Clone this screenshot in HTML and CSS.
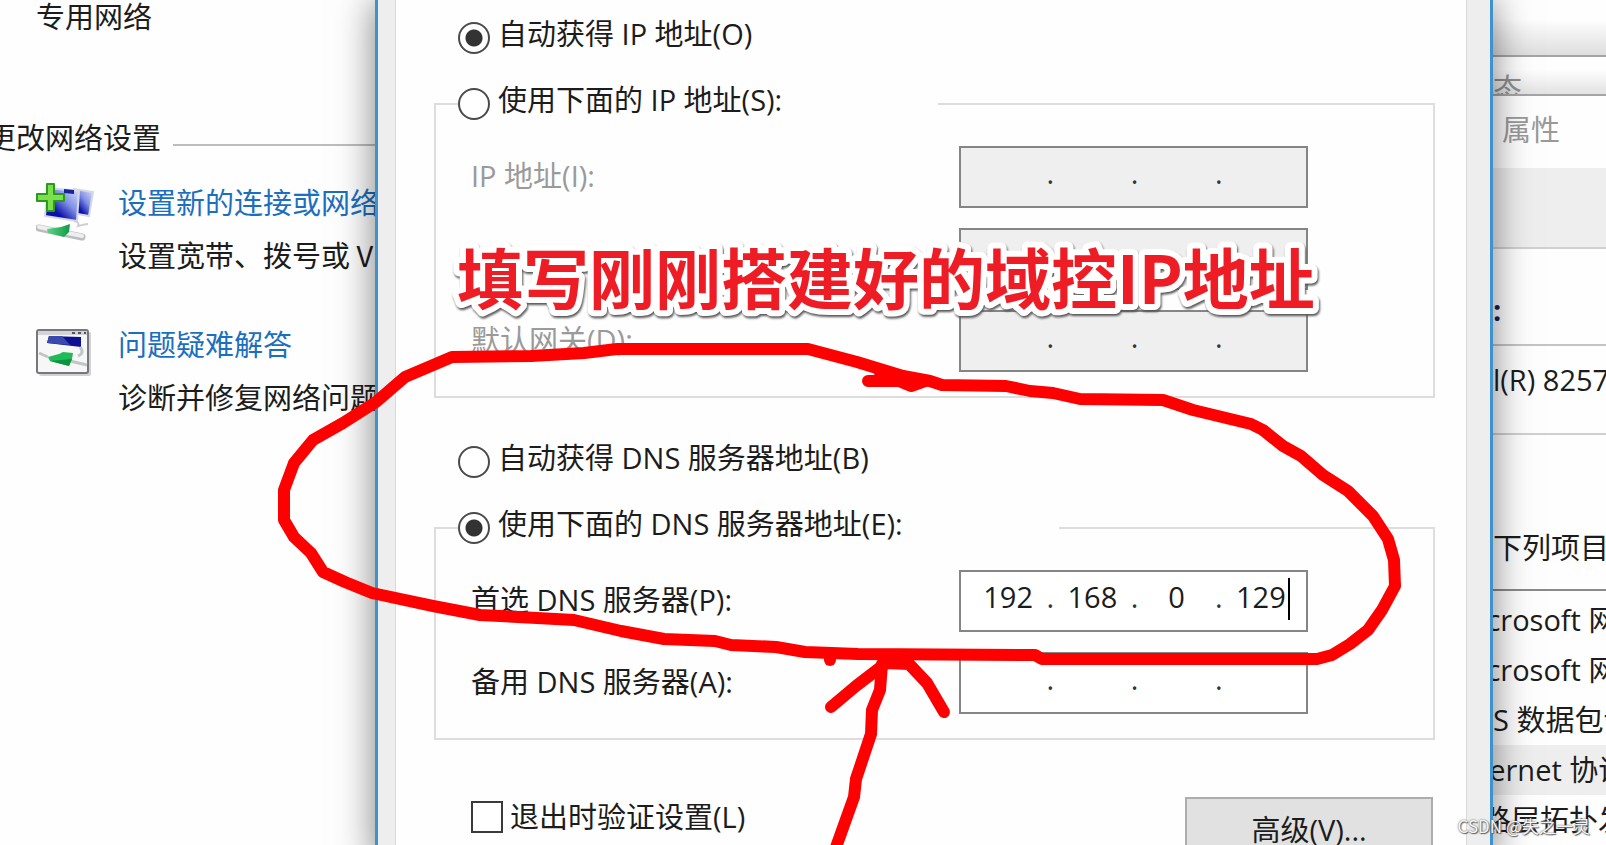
FILE: index.html
```html
<!DOCTYPE html>
<html lang="zh-CN">
<head>
    <meta charset="UTF-8">
    <meta name="viewport" content="width=device-width, initial-scale=1.0">
    <title>网络设置</title>
    <link rel="stylesheet" href="styles.css">
</head>
<body>

    <div class="desktop">
        <!-- Network center -->
        <div class="network-center">
            <p class="network-type">专用网络</p>
            <h2 class="section-title">更改网络设置</h2>

            <div class="task">
                <svg class="task-icon" width="60" height="60" viewBox="0 0 60 60" aria-hidden="true">
                    <defs>
                        <linearGradient id="screen" x1="0" y1="1" x2="1" y2="0">
                            <stop offset="0.3" stop-color="#0a10a8"/>
                            <stop offset="0.6" stop-color="#7f8fe6"/>
                            <stop offset="1" stop-color="#dfe6fb"/>
                        </linearGradient>
                        <linearGradient id="cable" x1="0" y1="0" x2="1" y2="0">
                            <stop offset="0" stop-color="#5fd486"/>
                            <stop offset="1" stop-color="#0f9a48"/>
                        </linearGradient>
                    </defs>
                    <path d="M38 6 L57 9 L53 33 L36 30 Z" fill="url(#screen)" stroke="#d5d9e4" stroke-width="2"/>
                    <path d="M12 5 L43 8 L41 38 L9 33 Z" fill="url(#screen)" stroke="#d5d9e4" stroke-width="2"/>
                    <path d="M28 6 L38 7 L38 11 L28 10 Z" fill="#1a1f9c"/>
                    <path d="M38 38 q6 1 4 5 q8 -2 10 -2" fill="none" stroke="#cfcfcf" stroke-width="2"/>
                    <path d="M3 45 L46 54" stroke="#bdbdbd" stroke-width="7" stroke-linecap="round"/>
                    <path d="M3 44 L46 53" stroke="#eeeeee" stroke-width="4" stroke-linecap="round"/>
                    <path d="M11 46 L25 44 L34 41 L33 49 L28 54 L12 50 Z" fill="url(#cable)"/>
                    <path d="M11 1 h7 v10 h10 v7 h-10 v10 h-7 v-10 h-10 v-7 h10 z" fill="#7be04c" stroke="#2c9a1c" stroke-width="2" stroke-linejoin="round"/>
                </svg>
                <div class="task-text">
                    <a href="#">设置新的连接或网络</a>
                    <p>设置宽带、拨号或 VPN</p>
                </div>
            </div>

            <div class="task">
                <svg class="task-icon" width="60" height="60" viewBox="0 0 60 60" aria-hidden="true">
                    <rect x="3" y="7" width="52" height="44" rx="2" fill="#d2d2d2"/>
                    <rect x="1" y="5" width="51" height="43" rx="2" fill="#f7f7f7" stroke="#77777d" stroke-width="2"/>
                    <path d="M2 8 H51" stroke="#d4d4d8" stroke-width="4"/>
                    <path d="M36 8 h3 M42 8 h3 M48 8 h2" stroke="#555555" stroke-width="2"/>
                    <path d="M13 11 L45 12 L45 22 L11 18 Z" fill="#0b1192"/>
                    <path d="M13 11 L26 11 L34 20 L11 18 Z" fill="#3a49ae"/>
                    <path d="M44 22 q5 6 -2 9 M3 28 L12 32 M34 36 L51 40" fill="none" stroke="#c3c6c6" stroke-width="3"/>
                    <path d="M12 32 L23 29 L27 27 L37 28 L36 34 L33 41 L14 36 Z" fill="#1fbb58"/>
                    <path d="M14 36 L33 41 L36 34 Z" fill="#0d9242"/>
                </svg>
                <div class="task-text">
                    <a href="#">问题疑难解答</a>
                    <p>诊断并修复网络问题</p>
                </div>
            </div>
        </div>

        <!-- TCP/IP properties dialog -->
        <form class="dialog">
            <div class="dialog-body">
                <label class="choice">
                    <input type="radio" name="ip-mode" checked>
                    <span>自动获得 IP 地址(O)</span>
                </label>

                <fieldset class="ip-group">
                    <legend>
                        <label class="choice">
                            <input type="radio" name="ip-mode">
                            <span>使用下面的 IP 地址(S):</span>
                        </label>
                    </legend>
                    <div class="field-row">
                        <label class="disabled" for="ip-1">IP 地址(I):</label>
                        <div class="ip-field disabled">
                            <input type="text" id="ip-1" disabled><span>.</span>
                            <input type="text" aria-label="IP 2" disabled><span>.</span>
                            <input type="text" aria-label="IP 3" disabled><span>.</span>
                            <input type="text" aria-label="IP 4" disabled>
                        </div>
                    </div>
                    <div class="field-row no-label">
                        <div class="ip-field disabled">
                            <input type="text" aria-label="子网掩码 1" disabled>
                            <input type="text" aria-label="子网掩码 2" disabled>
                            <input type="text" aria-label="子网掩码 3" disabled>
                            <input type="text" aria-label="子网掩码 4" disabled>
                        </div>
                    </div>
                    <div class="field-row">
                        <label class="disabled" for="gateway-1">默认网关(D):</label>
                        <div class="ip-field disabled">
                            <input type="text" id="gateway-1" disabled><span>.</span>
                            <input type="text" aria-label="默认网关 2" disabled><span>.</span>
                            <input type="text" aria-label="默认网关 3" disabled><span>.</span>
                            <input type="text" aria-label="默认网关 4" disabled>
                        </div>
                    </div>
                </fieldset>

                <label class="choice dns-auto">
                    <input type="radio" name="dns-mode">
                    <span>自动获得 DNS 服务器地址(B)</span>
                </label>

                <fieldset class="ip-group">
                    <legend>
                        <label class="choice">
                            <input type="radio" name="dns-mode" checked>
                            <span>使用下面的 DNS 服务器地址(E):</span>
                        </label>
                    </legend>
                    <div class="field-row">
                        <label for="dns-1">首选 DNS 服务器(P):</label>
                        <div class="ip-field">
                            <input type="text" id="dns-1" value="192"><span>.</span>
                            <input type="text" aria-label="首选 DNS 2" value="168"><span>.</span>
                            <input type="text" aria-label="首选 DNS 3" value="0"><span>.</span>
                            <input type="text" aria-label="首选 DNS 4" value="129">
                            <i class="caret"></i>
                        </div>
                    </div>
                    <div class="field-row">
                        <label for="alt-1">备用 DNS 服务器(A):</label>
                        <div class="ip-field">
                            <input type="text" id="alt-1"><span>.</span>
                            <input type="text" aria-label="备用 DNS 2"><span>.</span>
                            <input type="text" aria-label="备用 DNS 3"><span>.</span>
                            <input type="text" aria-label="备用 DNS 4">
                        </div>
                    </div>
                </fieldset>

                <div class="dialog-footer">
                    <label class="validate">
                        <input type="checkbox">
                        <span>退出时验证设置(L)</span>
                    </label>
                    <button type="button">高级(V)...</button>
                </div>
            </div>
        </form>

        <!-- Windows behind the dialog -->
        <div class="back-windows">
            <div class="back-top"></div>
            <div class="status-title">态</div>
            <div class="props-title">属性</div>
            <div class="props-tabs"></div>
            <div class="props-connect">:</div>
            <div class="props-adapter">l(R) 82574L</div>
            <div class="props-items">下列项目</div>
            <ul class="item-list">
                <li>Microsoft 网络客户端</li>
                <li>Microsoft 网络的文件</li>
                <li>QoS 数据包计划程序</li>
                <li class="selected">Internet 协议版本</li>
                <li>链路层拓扑发现</li>
            </ul>
        </div>
    </div>

    <!-- Hand-drawn marks -->
    <svg class="marks" viewBox="0 0 1606 845" preserveAspectRatio="none">
        <g class="pen">
            <path d="M452 357 L531 356 L584 353 L617 349 L808 349 L857 362 L903 376 L930 381 L942 385 L1006 386 L1030 391 L1053 393 L1080 399 L1163 400 L1193 410 L1251 424 L1263 430 L1283 446 L1301 456 L1323 475 L1348 491 L1373 516 L1388 539 L1394 560 L1395 586 L1382 610 L1368 630 L1350 644 L1332 655 L1317 659 L1042 659 L1035 655 L858 654 L805 652 L776 647 L731 645 L715 641 L664 639 L621 631 L574 620 L537 618 L480 615 L433 606 L372 593 L345 582 L323 572 L311 553 L294 537 L284 520 L284 490 L294 463 L313 440 L343 423 L376 402 L405 377 Z"/>
            <path d="M868 381 L925 381 L911 386 L880 373"/>
            <path d="M830 655 V660"/>
            <path d="M831 707 L856 686 L886 663 L909 664 L927 683 L944 712"/>
            <path d="M882 664 L880 690 L872 710 L871 734 L856 779 L854 797 L835 850"/>
        </g>
        <text class="note" x="457" y="304">填写刚刚搭建好的域控IP地址</text>
    </svg>

    <div class="watermark">CSDN @失之一灵</div>

</body>
</html>
```
FILE: styles.css
```css
* {
    box-sizing: border-box;
}

body {
    margin: 0;
    height: 100vh;
    overflow: hidden;
    position: relative;
    font-family: "Open Sans", "Noto Sans CJK SC", sans-serif;
    font-size: 29px;
    line-height: 40px;
    color: #1c1c1c;
    background-color: #fefefe;
    white-space: nowrap;
}

p, h2, ul {
    margin: 0;
    padding: 0;
    font-size: inherit;
    font-weight: normal;
}

.desktop {
    display: grid;
    grid-template-columns: 375px 1fr 113px;
    height: 100%;
}

/* Network center */
.network-center {
    overflow: hidden;
    padding-left: 36px;
    font-family: "Noto Sans CJK SC", sans-serif;
}

.network-type {
    line-height: 30px;
}

.section-title {
    display: flex;
    align-items: center;
    gap: 12px;
    margin: 86px 0 25px -49px;
}

.section-title::after {
    content: "";
    flex: 1;
    height: 2px;
    margin-top: 18px;
    background-color: #bdbdbd;
}

.task {
    display: flex;
    gap: 22px;
    margin-bottom: 49px;
}

.task-icon {
    flex: none;
    margin-top: 2px;
}

.task-text a {
    display: block;
    margin-bottom: 13px;
    color: #1b6fc0;
    text-decoration: none;
}

/* Dialog */
.dialog {
    position: relative;
    z-index: 1;
    border: solid #3f93cd;
    border-width: 0 3px;
    padding: 0 23px 0 17px;
    background-color: #eeeeee;
    box-shadow: 0 0 36px rgba(0, 0, 0, 0.5);
}

.dialog-body {
    height: 100%;
    padding: 18px 31px 0 38px;
    border: solid #d9d9d9;
    border-width: 0 1px;
    background-color: #fefefe;
}

.choice {
    display: flex;
    gap: 8px;
    height: 40px;
    line-height: 32px;
}

.dialog-body > .choice {
    margin: 0 0 26px 24px;
}

.choice input {
    appearance: none;
    width: 32px;
    height: 32px;
    margin: 4px 0 0;
    border: 2px solid #4a4a4a;
    border-radius: 50%;
    background-color: #fff;
}

.choice input:checked {
    background: radial-gradient(circle, #333 8px, #fff 9px);
}

.ip-group {
    display: grid;
    gap: 20px;
    margin: 0;
    padding: 22px 0 24px 22px;
    border: 2px solid #dddddd;
}

.ip-group legend {
    padding: 0 156px 0 0;
}

.field-row {
    display: flex;
    justify-content: space-between;
    align-items: center;
    padding: 0 125px 0 13px;
}

.field-row > label {
    padding-bottom: 2px;
}

.no-label {
    justify-content: flex-end;
}

.field-row .disabled {
    color: #9a9a9a;
}

.ip-field {
    position: relative;
    display: flex;
    align-items: center;
    width: 349px;
    height: 62px;
    padding: 0 3px 8px 5px;
    border: 2px solid #858585;
    background-color: #fff;
}

.ip-field.disabled {
    background-color: #efefef;
}

.ip-field input {
    flex: 1;
    width: 0;
    min-width: 0;
    padding: 0;
    border: 0;
    background: none;
    font: inherit;
    color: inherit;
    text-align: center;
    outline: none;
}

.ip-field span {
    display: flex;
    justify-content: center;
    width: 0;
    color: #333;
}

.caret {
    position: absolute;
    top: 6px;
    right: 16px;
    width: 2px;
    height: 42px;
    background-color: #000;
}

.dialog-body > .dns-auto {
    margin-top: 44px;
}

.dialog-footer {
    display: flex;
    justify-content: space-between;
    align-items: flex-start;
    margin-top: 57px;
    padding: 0 2px 0 37px;
}

.validate {
    display: flex;
    align-items: center;
    gap: 7px;
}

.validate input {
    appearance: none;
    width: 32px;
    height: 32px;
    margin: 0;
    border: 2px solid #3a3a3a;
    background-color: #fff;
}

button {
    width: 248px;
    height: 66px;
    border: 2px solid #adadad;
    background-color: #e1e1e1;
    font: inherit;
    color: inherit;
}

/* Windows behind the dialog */
.back-windows {
    overflow: hidden;
}

.back-top {
    height: 57px;
    border-bottom: 2px solid #a5a5a5;
    background: linear-gradient(#fefefe 35%, #dedede);
}

.status-title {
    height: 39px;
    padding-top: 12px;
    overflow: hidden;
    border-bottom: 2px solid #a5a5a5;
    background: linear-gradient(#fefefe 35%, #e2e2e2);
    color: #8f8f8f;
}

.props-title {
    height: 72px;
    padding: 14px 0 0 9px;
    color: #9a9a9a;
}

.props-tabs {
    height: 81px;
    border-bottom: 2px solid #d0d0d0;
    background-color: #eeeeee;
}

.props-connect {
    height: 97px;
    padding-top: 41px;
    border-bottom: 2px solid #c4c4c4;
    color: #1a1a5e;
    font-weight: bold;
}

.props-adapter {
    height: 89px;
    padding-top: 14px;
    border-bottom: 2px solid #d0d0d0;
}

.props-items {
    height: 156px;
    padding-top: 93px;
    border-bottom: 2px solid #8a8a8a;
}

.item-list {
    margin-left: -40px;
    padding-top: 4px;
    list-style: none;
    line-height: 50px;
}

.item-list .selected {
    background-color: #eeeeee;
}

/* Marks drawn over the windows */
.marks {
    position: absolute;
    z-index: 2;
    inset: 0;
    width: 100%;
    height: 100%;
    pointer-events: none;
}

.pen {
    fill: none;
    stroke: #ff0000;
    stroke-width: 12px;
    stroke-linecap: round;
    stroke-linejoin: round;
}

.note {
    font-family: "Noto Sans CJK SC", sans-serif;
    font-size: 66px;
    font-weight: bold;
    fill: #ee1c25;
    stroke: #fff;
    stroke-width: 12px;
    stroke-linejoin: round;
    paint-order: stroke;
    filter: drop-shadow(1px 2px 1px #555);
}

.watermark {
    position: absolute;
    z-index: 3;
    right: 16px;
    bottom: 7px;
    font-family: "Noto Sans CJK SC", sans-serif;
    font-size: 17px;
    line-height: 24px;
    color: #f4f4f4;
    text-shadow: 0 0 2px #555, 1px 1px 1px #666;
}
```
